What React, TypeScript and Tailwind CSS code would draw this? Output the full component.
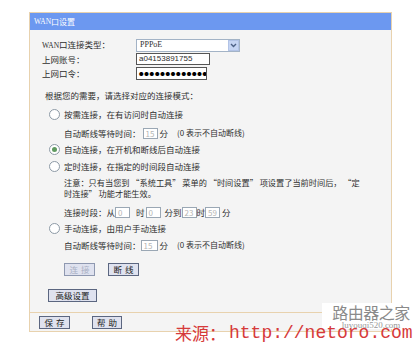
import React from 'react';

const FONT = "font-['Noto_Sans_CJK_SC',sans-serif]";

function Radio({ checked }: { checked?: boolean }) {
  return (
    <span className="w-[11px] h-[11px] rounded-full border border-[#8d9aa6] bg-white flex items-center justify-center shrink-0">
      {checked && <span className="w-[5px] h-[5px] rounded-full bg-[#5f9a5f]" />}
    </span>
  );
}

function SmallBox({ value, w = 'w-[15px]' }: { value: string; w?: string }) {
  return (
    <span className={`${w} h-[11px] shrink-0 border border-[#9aa7b4] bg-white text-[#b5b5b5] text-[8px] leading-[9px] pl-[2px] inline-flex items-center`}>
      {value}
    </span>
  );
}

function Btn({ label, disabled, w }: { label: string; disabled?: boolean; w: string }) {
  return (
    <button
      className={`${w} h-[13px] shrink-0 border bg-[#dfe2ef] text-[8.5px] leading-[11px] flex items-center justify-center gap-[3px] ${
        disabled ? 'text-[#a9b0c4] border-[#8e98b0]' : 'text-[#222] border-[#5b6680]'
      }`}
    >
      {label.split(' ').map((p) => (
        <span key={p}>{p}</span>
      ))}
    </button>
  );
}

export default function App() {
  return (
    <div className={`relative w-[420px] h-[342px] bg-white overflow-hidden whitespace-nowrap ${FONT} text-[8.5px] text-[#2e2e2e]`}>
      <div className="pl-[29px] pt-[12px]">
        {/* 面板 */}
        <div className="w-[363px] border border-[#e8d2ae] bg-[#f4f4f4]">
          {/* 标题栏 */}
          <div className="h-[17px] bg-[#6c98f0] text-white text-[8px] flex items-center pl-[4px]">
            <span className="font-['Liberation_Serif',serif] text-[7.5px]">WAN</span>口设置
          </div>

          <div className="pt-[8px] pb-[10px] flex flex-col">
            {/* 基本设置 */}
            <div className="flex items-center h-[14px] pl-[12px]">
              <span className="w-[94px] shrink-0">
                <span className="font-['Liberation_Serif',serif] text-[7.5px]">WAN</span>口连接类型：
              </span>
              <span className="w-[104px] h-[13px] border border-[#a3b3c6] bg-white flex items-center justify-between pl-[3px]">
                <span className="font-['Liberation_Serif',serif] text-[8px]">PPPoE</span>
                <span className="w-[11px] h-[11px] bg-[#c6d5f3] border border-[#b2c3e6] flex items-center justify-center">
                  <svg width="7" height="5" viewBox="0 0 7 5">
                    <path d="M1 1 L3.5 3.5 L6 1" stroke="#4d6185" strokeWidth="1.4" fill="none" />
                  </svg>
                </span>
              </span>
            </div>
            <div className="flex items-center h-[14px] pl-[12px]">
              <span className="w-[94px] shrink-0">上网账号：</span>
              <span className="w-[74px] h-[12px] border border-[#555] bg-white flex items-center pl-[2px] text-[8px] font-['Liberation_Sans',sans-serif]">
                a04153891755
              </span>
            </div>
            <div className="flex items-center h-[14px] pl-[12px]">
              <span className="w-[94px] shrink-0">上网口令：</span>
              <span className="w-[71px] h-[13px] border border-[#555] bg-white flex items-center pl-[2px] text-[4.5px] tracking-[0.8px] text-black overflow-hidden">
                ●●●●●●●●●●●●●
              </span>
            </div>

            <div className="flex items-center h-[14px] pl-[15px] mt-[8px]">根据您的需要，请选择对应的连接模式：</div>

            {/* 按需连接 */}
            <div className="flex items-center h-[14px] pl-[19px] mt-[5px] gap-[4px]">
              <Radio />
              <span>按需连接，在有访问时自动连接</span>
            </div>
            <div className="flex items-center h-[14px] pl-[34px] mt-[5px]">
              <span>自动断线等待时间：</span>
              <span className="ml-[2px]">
                <SmallBox value="15" w="w-[15px]" />
              </span>
              <span className="ml-[2px]">分</span>
              <span className="ml-[9px] text-[8px]">(0 表示不自动断线)</span>
            </div>

            {/* 自动连接 */}
            <div className="flex items-center h-[14px] pl-[19px] mt-[2px] gap-[4px]">
              <Radio checked />
              <span>自动连接，在开机和断线后自动连接</span>
            </div>

            {/* 定时连接 */}
            <div className="flex items-center h-[14px] pl-[19px] mt-[3px] gap-[4px]">
              <Radio />
              <span>定时连接，在指定的时间段自动连接</span>
            </div>
            <div className="pl-[34px] mt-[4px] leading-[11px] text-[8.2px]">
              注意：只有当您到 “系统工具” 菜单的 “时间设置” 项设置了当前时间后， “定
              <br />
              时连接” 功能才能生效。
            </div>
            <div className="flex items-center h-[14px] pl-[34px] mt-[6px]">
              <span>连接时段：从</span>
              <SmallBox value="0" />
              <span className="ml-[6px]">时</span>
              <span className="ml-[1px]">
                <SmallBox value="0" />
              </span>
              <span className="ml-[4px]">分到</span>
              <SmallBox value="23" />
              <span>时</span>
              <SmallBox value="59" />
              <span className="ml-[2px]">分</span>
            </div>

            {/* 手动连接 */}
            <div className="flex items-center h-[14px] pl-[19px] mt-[2px] gap-[4px]">
              <Radio />
              <span>手动连接，由用户手动连接</span>
            </div>
            <div className="flex items-center h-[14px] pl-[34px] mt-[3px]">
              <span>自动断线等待时间：</span>
              <SmallBox value="15" w="w-[17px]" />
              <span className="ml-[2px]">分</span>
              <span className="ml-[9px] text-[8px]">(0 表示不自动断线)</span>
            </div>

            <div className="flex items-center pl-[34px] mt-[11px] gap-[13px]">
              <Btn label="连 接" disabled w="w-[31px]" />
              <Btn label="断 线" w="w-[31px]" />
            </div>

            <div className="flex pl-[18px] mt-[13px]">
              <Btn label="高级设置" w="w-[49px]" />
            </div>
          </div>

          {/* 底部 */}
          <div className="border-t border-[#e8d2ae] h-[19px] flex items-center pl-[9px] gap-[22px]">
            <Btn label="保 存" w="w-[31px]" />
            <Btn label="帮 助" w="w-[30px]" />
          </div>
        </div>
      </div>

      {/* 水印 */}
      <div className="absolute left-[322px] top-[303px] w-[98px] h-[26px] bg-white flex flex-col items-center">
        <span className="text-[16px] leading-[18px] text-[#8a8a8a] tracking-[-0.5px]">路由器之家</span>
        <span className="text-[9px] leading-[9px] text-[#999] font-['Liberation_Serif',serif]">luyouqi520.com</span>
      </div>
      <div className="absolute left-[175px] top-[324px] whitespace-nowrap text-[#d63a3a] text-[17px] leading-[18px] flex items-center">
        <span>来源：</span>
        <span className="font-['Liberation_Mono',monospace] text-[18px] ml-[3px]">http://netoro.com</span>
      </div>
    </div>
  );
}
